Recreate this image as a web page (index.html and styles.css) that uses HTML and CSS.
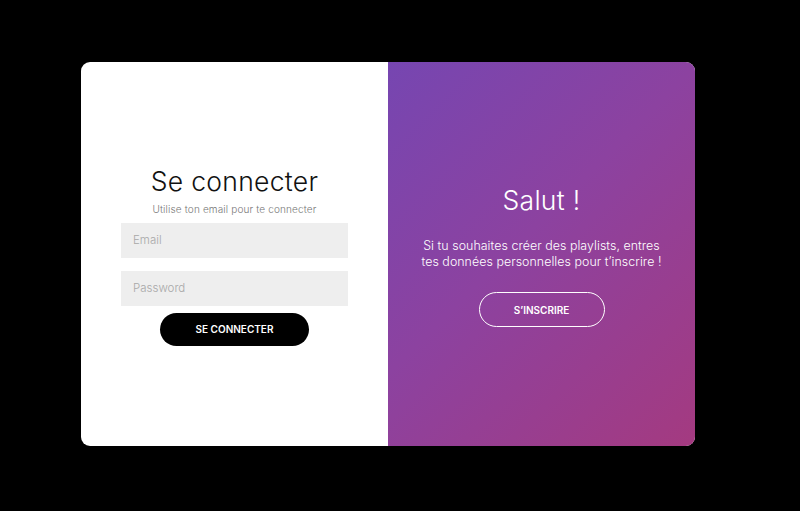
FILE: index.html
```html
<!DOCTYPE html>
<html lang="fr">
<head>
<meta charset="utf-8">
<title>Connexion</title>
<link rel="stylesheet" href="styles.css">
</head>
<body>
<div class="card">
  <form class="panel signin">
    <h1 class="title">Se connecter</h1>
    <span class="hint">Utilise ton email pour te connecter</span>
    <input class="field" type="email" placeholder="Email">
    <input class="field" type="password" placeholder="Password">
    <button class="btn btn-dark" type="button">SE CONNECTER</button>
  </form>
  <div class="panel overlay">
    <h1 class="title light">Salut !</h1>
    <p class="text">Si tu souhaites créer des playlists, entres tes données personnelles pour t’inscrire !</p>
    <button class="btn btn-ghost" type="button">S’INSCRIRE</button>
  </div>
</div>
</body>
</html>
```

FILE: styles.css
```css
* { box-sizing: border-box; }
html, body { height: 100%; }
body {
  margin: 0;
  background: #000;
  font-family: "Inter", "Noto Sans", sans-serif;
  padding: 62px 0 0 81px;
}
.card {
  width: 614px;
  height: 384px;
  display: flex;
  border-radius: 9px;
  overflow: hidden;
  background: #fff;
}
.panel {
  width: 307px;
  display: flex;
  flex-direction: column;
  align-items: center;
  justify-content: center;
}
.signin {
  padding: 2px 40px 0;
}
.title {
  margin: 0;
  font-weight: 300;
  font-size: 26.5px;
  letter-spacing: 0.3px;
  color: #111;
}
.hint {
  margin-top: 6px;
  font-size: 10px;
  font-weight: 300;
  letter-spacing: 0.15px;
  color: #777;
}
.field {
  width: 227px;
  height: 35px;
  border: none;
  background: #eee;
  padding: 0 12px;
  font-family: inherit;
  font-size: 11.5px;
  font-weight: 300;
  margin-top: 8px;
  outline: none;
}
.field + .field { margin-top: 13px; }
.field::placeholder { color: #a8a8a8; }
.btn {
  font-family: inherit;
  font-size: 10px;
  font-weight: 600;
  border-radius: 20px;
  cursor: pointer;
}
.btn-dark {
  margin-top: 7px;
  width: 149px;
  height: 33px;
  border: none;
  background: #000;
  color: #fff;
}
.overlay {
  background: linear-gradient(135deg, #7646b1 0%, #8c42a0 45%, #a43a80 100%);
  color: #fff;
  padding: 3px 20px 0;
}
.title.light { color: #fff; }
.text {
  margin: 22px 0 0;
  max-width: 250px;
  font-size: 12.4px;
  line-height: 16px;
  font-weight: 300;
  letter-spacing: 0.05px;
  text-align: center;
}
.btn-ghost {
  margin-top: 22px;
  width: 126px;
  height: 35px;
  background: transparent;
  border: 1px solid #fff;
  color: #fff;
}
```
